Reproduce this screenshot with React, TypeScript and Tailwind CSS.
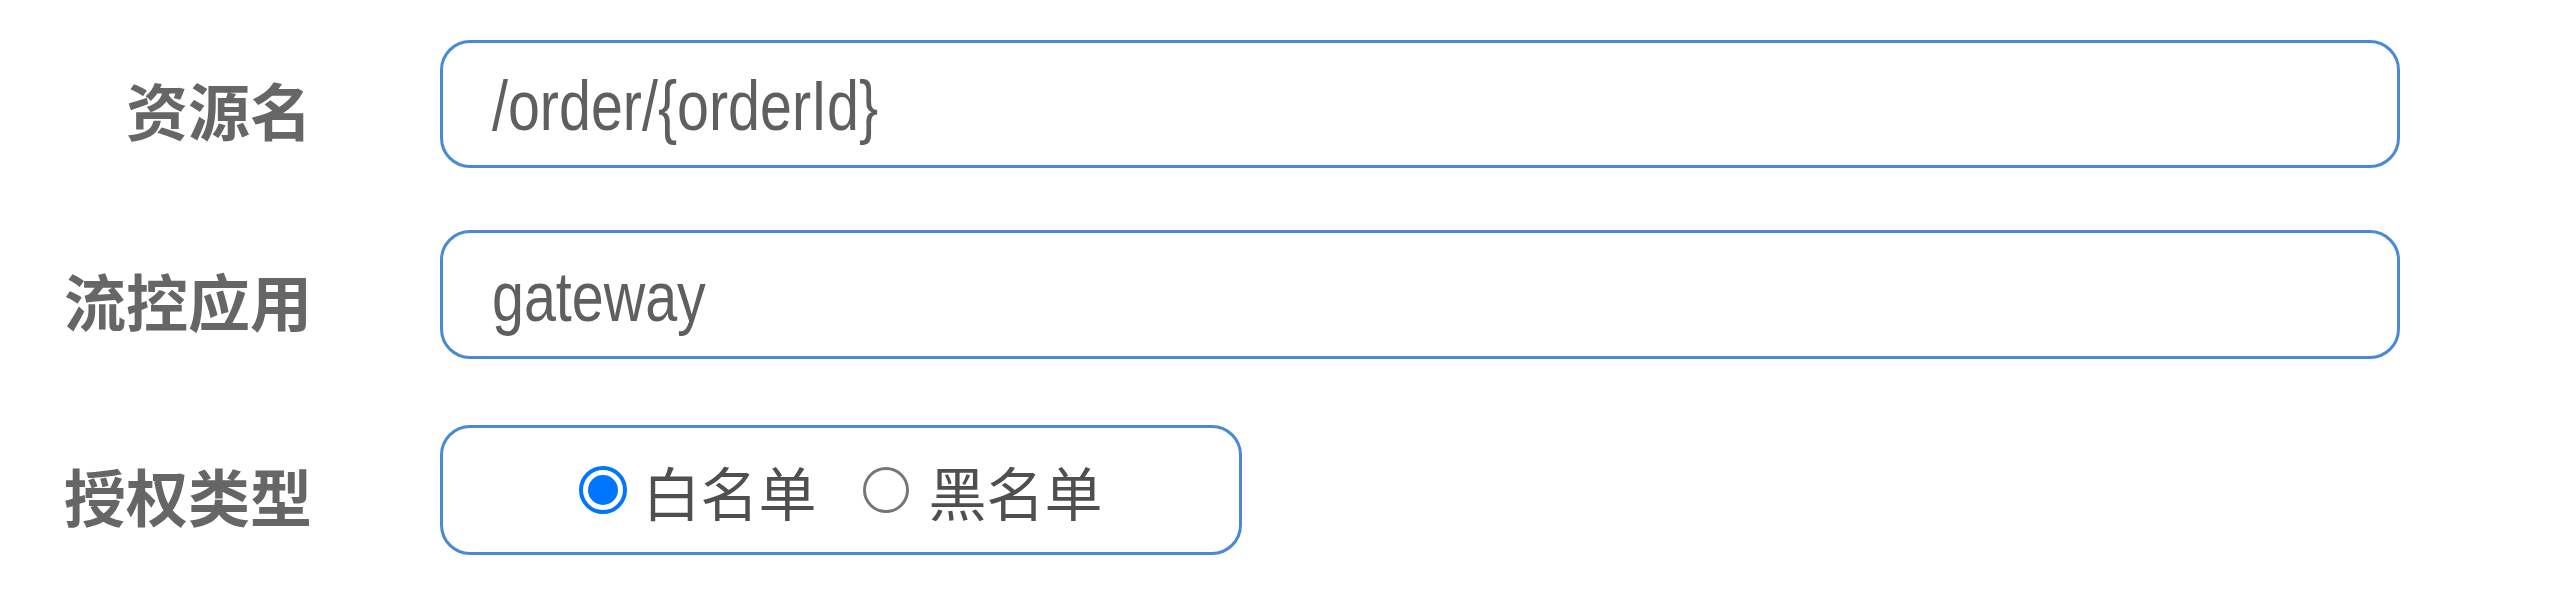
import React from "react";

const cjk = { fontFamily: '"Liberation Sans", "Noto Sans CJK SC", sans-serif' };
const latin = { fontFamily: '"Liberation Sans", "Noto Sans CJK SC", sans-serif' };

function Label({ children }: { children: React.ReactNode }) {
  return (
    <div
      className="w-[312px] shrink-0 text-right text-[62px] font-bold leading-none text-[#666666] mt-[22px]"
      style={cjk}
    >
      {children}
    </div>
  );
}

function Field({ value, height }: { value: string; height: string }) {
  return (
    <div
      className={`ml-[128px] w-[1960px] ${height} rounded-[30px] border-[3px] border-[#4a89d3] flex items-center pl-[49px] text-[70px] text-[#5f5f5f] leading-none`}
      style={latin}
    >
      <span className="inline-block origin-left scale-x-[0.82] whitespace-nowrap mt-[4px]">{value}</span>
    </div>
  );
}

export default function App() {
  return (
    <div className="w-[2560px] h-[597px] bg-white pt-[40px] flex flex-col">
      <div className="flex items-center h-[128px]">
        <Label>资源名</Label>
        <Field value="/order/{orderId}" height="h-[128px]" />
      </div>
      <div className="flex items-center h-[129px] mt-[62px]">
        <Label>流控应用</Label>
        <Field value="gateway" height="h-[129px]" />
      </div>
      <div className="flex items-center h-[130px] mt-[66px]">
        <Label>授权类型</Label>
        <div className="ml-[128px] w-[802px] h-[130px] rounded-[30px] border-[3px] border-[#4a89d3] flex items-center justify-center">
          <div className="flex items-center">
            <div className="w-[48px] h-[48px] rounded-full border-[4px] border-[#0075ff] flex items-center justify-center">
              <div className="w-[30px] h-[30px] rounded-full bg-[#0075ff]" />
            </div>
            <span className="ml-[15px] text-[58px] leading-none text-[#4f4f4f] mt-[12px]" style={cjk}>
              白名单
            </span>
            <div className="ml-[46px] w-[46px] h-[46px] rounded-full border-[3px] border-[#767676] bg-white" />
            <span className="ml-[20px] text-[58px] leading-none text-[#4f4f4f] mt-[12px]" style={cjk}>
              黑名单
            </span>
          </div>
        </div>
      </div>
    </div>
  );
}
